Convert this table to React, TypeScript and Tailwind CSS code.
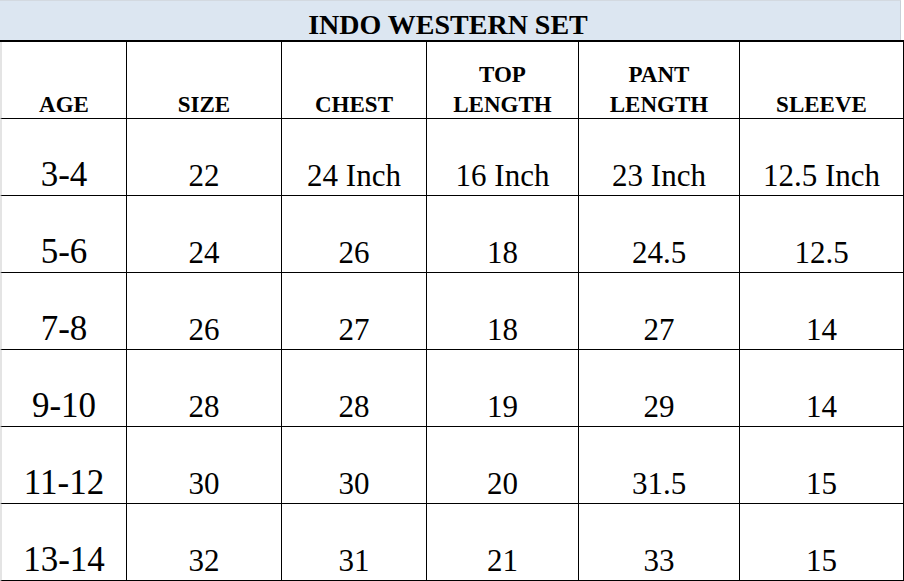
import React from "react";

const headers: string[][] = [
  ["AGE"],
  ["SIZE"],
  ["CHEST"],
  ["TOP", "LENGTH"],
  ["PANT", "LENGTH"],
  ["SLEEVE"],
];

const rows: string[][] = [
  ["3-4", "22", "24 Inch", "16 Inch", "23 Inch", "12.5 Inch"],
  ["5-6", "24", "26", "18", "24.5", "12.5"],
  ["7-8", "26", "27", "18", "27", "14"],
  ["9-10", "28", "28", "19", "29", "14"],
  ["11-12", "30", "30", "20", "31.5", "15"],
  ["13-14", "32", "31", "21", "33", "15"],
];

export default function App() {
  return (
    <div className="w-[904px] h-[581px] bg-white text-black font-[Liberation_Serif,serif] overflow-hidden">
      <div className="flex">
        <div className="w-[901px] h-[40px] bg-[#dce6f1] border-t border-t-[#d3d9e0] border-r border-r-[#c9d0d8] flex items-end justify-center pb-[1px] pr-[4px]">
          <span className="text-[28px] font-bold leading-none">INDO WESTERN SET</span>
        </div>
        <div className="w-[3px] h-[40px] bg-white" />
      </div>
      <div className="grid grid-cols-[127px_155px_145px_152px_161px_164px] border-t-2 border-black">
        {headers.map((h, i) => (
          <div
            key={`h${i}`}
            className={
              "h-[77px] border-b border-r border-black flex items-end justify-center" +
              (i === 0 ? " border-l-2 border-l-[#e4e4e4]" : "")
            }
          >
            <div className="text-[23px] font-bold leading-[30px] text-center -mb-[2px]">
              {h.map((line, j) => (
                <div key={j}>{line}</div>
              ))}
            </div>
          </div>
        ))}
        {rows.map((r, ri) =>
          r.map((c, ci) => (
            <div
              key={`r${ri}c${ci}`}
              className={
                "h-[77px] border-b border-r border-black flex items-end justify-center" +
                (ci === 0 ? " border-l-2 border-l-[#e4e4e4] pb-[3px]" : " pb-[4px]")
              }
            >
              <span className={ci === 0 ? "text-[35px] leading-none" : "text-[31px] leading-none"}>{c}</span>
            </div>
          ))
        )}
      </div>
    </div>
  );
}
